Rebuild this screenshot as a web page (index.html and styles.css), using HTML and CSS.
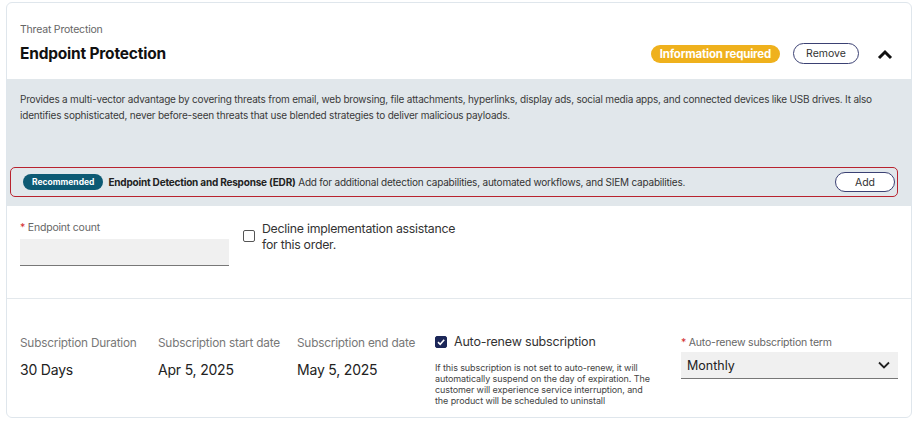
FILE: index.html
```html
<!DOCTYPE html>
<html>
<head>
<meta charset="utf-8">
<link rel="stylesheet" href="styles.css">
</head>
<body>
<div class="card">
  <div class="header">
    <div class="titles">
      <div class="eyebrow">Threat Protection</div>
      <div class="title">Endpoint Protection</div>
    </div>
    <div class="actions">
      <span class="badge-warn">Information required</span>
      <button class="btn-outline btn-remove">Remove</button>
      <svg class="caret" width="16" height="12" viewBox="0 0 16 12"><path d="M2 10 L8 4 L14 10" fill="none" stroke="#111" stroke-width="3"/></svg>
    </div>
  </div>
  <div class="panel">
    <p class="desc">Provides a multi-vector advantage by covering threats from email, web browsing, file attachments, hyperlinks, display ads, social media apps, and connected devices like USB drives. It also identifies sophisticated, never before-seen threats that use blended strategies to deliver malicious payloads.</p>
    <div class="reco">
      <span class="pill">Recommended</span>
      <span class="reco-text"><b>Endpoint Detection and Response (EDR)</b> Add for additional detection capabilities, automated workflows, and SIEM capabilities.</span>
      <button class="btn-outline btn-add">Add</button>
    </div>
  </div>
  <div class="count-section">
    <div class="field">
      <div class="label"><span class="req">*</span> Endpoint count</div>
      <div class="input"></div>
    </div>
    <label class="decline">
      <span class="box"></span>
      <span class="decline-text">Decline implementation assistance for this order.</span>
    </label>
  </div>
  <div class="sub-section">
    <div class="col">
      <div class="sub-label">Subscription Duration</div>
      <div class="sub-value">30 Days</div>
    </div>
    <div class="col">
      <div class="sub-label">Subscription start date</div>
      <div class="sub-value">Apr 5, 2025</div>
    </div>
    <div class="col">
      <div class="sub-label">Subscription end date</div>
      <div class="sub-value">May 5, 2025</div>
    </div>
    <div class="col renew">
      <div class="renew-row">
        <span class="box checked"><svg width="10" height="10" viewBox="0 0 10 10"><path d="M2 5.2 L4.2 7.3 L8.2 2.8" fill="none" stroke="#fff" stroke-width="1.6"/></svg></span>
        <span class="renew-label">Auto-renew subscription</span>
      </div>
      <p class="renew-note">If this subscription is not set to auto-renew, it will automatically suspend on the day of expiration. The customer will experience service interruption, and the product will be scheduled to uninstall</p>
    </div>
    <div class="col term">
      <div class="label"><span class="req">*</span> Auto-renew subscription term</div>
      <div class="select">
        <span>Monthly</span>
        <svg width="14" height="10" viewBox="0 0 14 10"><path d="M2 2.5 L7 7.5 L12 2.5" fill="none" stroke="#222" stroke-width="1.8"/></svg>
      </div>
    </div>
  </div>
</div>
</body>
</html>
```

FILE: styles.css
```css
* { box-sizing: border-box; }
body {
  margin: 0;
  background: #fff;
  font-family: Inter, "Noto Sans", sans-serif;
  color: #222;
}
.card {
  margin: 2px 0 0 6px;
  width: 906px;
  height: 416px;
  border: 1px solid #dfe6ec;
  border-radius: 6px;
  overflow: hidden;
  display: flex;
  flex-direction: column;
}
.header {
  height: 76px;
  display: flex;
  justify-content: space-between;
  align-items: flex-end;
  padding: 0 18px 16px 13px;
}
.eyebrow {
  font-size: 10.5px;
  color: #666;
  letter-spacing: -0.2px;
  margin-bottom: 8px;
}
.title {
  font-size: 15.5px;
  font-weight: 700;
  color: #111;
  letter-spacing: -0.2px;
}
.actions {
  display: flex;
  align-items: center;
  margin-bottom: -1px;
}
.badge-warn {
  background: #efb11d;
  color: #fff;
  font-weight: 700;
  font-size: 11.5px;
  letter-spacing: -0.2px;
  height: 18px;
  line-height: 18px;
  padding: 0 9px;
  border-radius: 9px;
  margin-right: 13px;
}
.btn-outline {
  background: #fff;
  border: 1px solid #3b4173;
  border-radius: 11px;
  font-family: Inter, "Noto Sans", sans-serif;
  color: #333;
  padding: 0;
}
.btn-remove {
  width: 66px;
  height: 21px;
  font-size: 10.5px;
  margin-right: 18px;
}
.caret { display: block; }
.panel {
  background: #e1e7eb;
  height: 127px;
  padding: 12px 13px 0 3px;
  display: flex;
  flex-direction: column;
}
.desc {
  margin: 0 0 0 10px;
  font-size: 10px;
  line-height: 16px;
  color: #3a3a3a;
  letter-spacing: -0.2px;
  height: 76px;
}
.reco {
  height: 30px;
  border: 1.5px solid #b8232f;
  border-radius: 5px;
  display: flex;
  align-items: center;
  padding: 0 2px 0 12px;
}
.pill {
  background: #0d5a74;
  color: #fff;
  font-size: 8.5px;
  font-weight: 700;
  height: 16px;
  line-height: 16px;
  padding: 0 9px;
  border-radius: 8px;
  margin-right: 5px;
}
.reco-text {
  font-size: 10px;
  color: #333;
  letter-spacing: -0.2px;
  flex: 1;
}
.reco-text b { color: #222; }
.btn-add {
  width: 60px;
  height: 20px;
  font-size: 10.5px;
}
.count-section {
  height: 93px;
  border-bottom: 1px solid #e3e8ec;
  display: flex;
  padding: 15px 13px 0 13px;
}
.field { width: 209px; }
.label {
  font-size: 10.5px;
  color: #666;
  letter-spacing: -0.2px;
  height: 18px;
}
.req { color: #d32f2f; }
.input {
  height: 27px;
  background: #f0f0f0;
  border-bottom: 1px solid #777;
}
.decline {
  display: flex;
  align-items: flex-start;
  margin-left: 14px;
  padding-top: 0;
}
.box {
  width: 12px;
  height: 12px;
  border: 1.5px solid #555;
  border-radius: 2px;
  margin-top: 9px;
  margin-right: 7px;
  flex: none;
  display: flex;
  align-items: center;
  justify-content: center;
}
.decline-text {
  font-size: 12.3px;
  line-height: 16px;
  color: #333;
  width: 200px;
  letter-spacing: -0.25px;
}
.sub-section {
  flex: 1;
  display: grid;
  grid-template-columns: 138px 139px 138px 246px 1fr;
  padding: 37px 13px 0 13px;
}
.sub-label {
  font-size: 11.8px;
  color: #777;
  letter-spacing: -0.2px;
  margin-bottom: 10px;
  line-height: 15px;
}
.sub-value {
  font-size: 14px;
  color: #222;
  letter-spacing: -0.2px;
}
.renew-row {
  display: flex;
  align-items: center;
  margin-top: -2px;
}
.box.checked {
  margin: 0 7px 0 0;
  background: #1c2758;
  border-color: #1c2758;
}
.renew-label {
  font-size: 12.5px;
  color: #333;
  letter-spacing: -0.2px;
}
.renew-note {
  margin: 13px 0 0 0;
  font-size: 9px;
  line-height: 11px;
  color: #444;
  width: 218px;
  letter-spacing: -0.1px;
}
.term .label { height: 16px; }
.select {
  height: 27px;
  background: #f0f0f0;
  border-bottom: 1px solid #777;
  display: flex;
  align-items: center;
  justify-content: space-between;
  padding: 0 7px 0 6px;
  font-size: 12.5px;
  color: #222;
}
```
